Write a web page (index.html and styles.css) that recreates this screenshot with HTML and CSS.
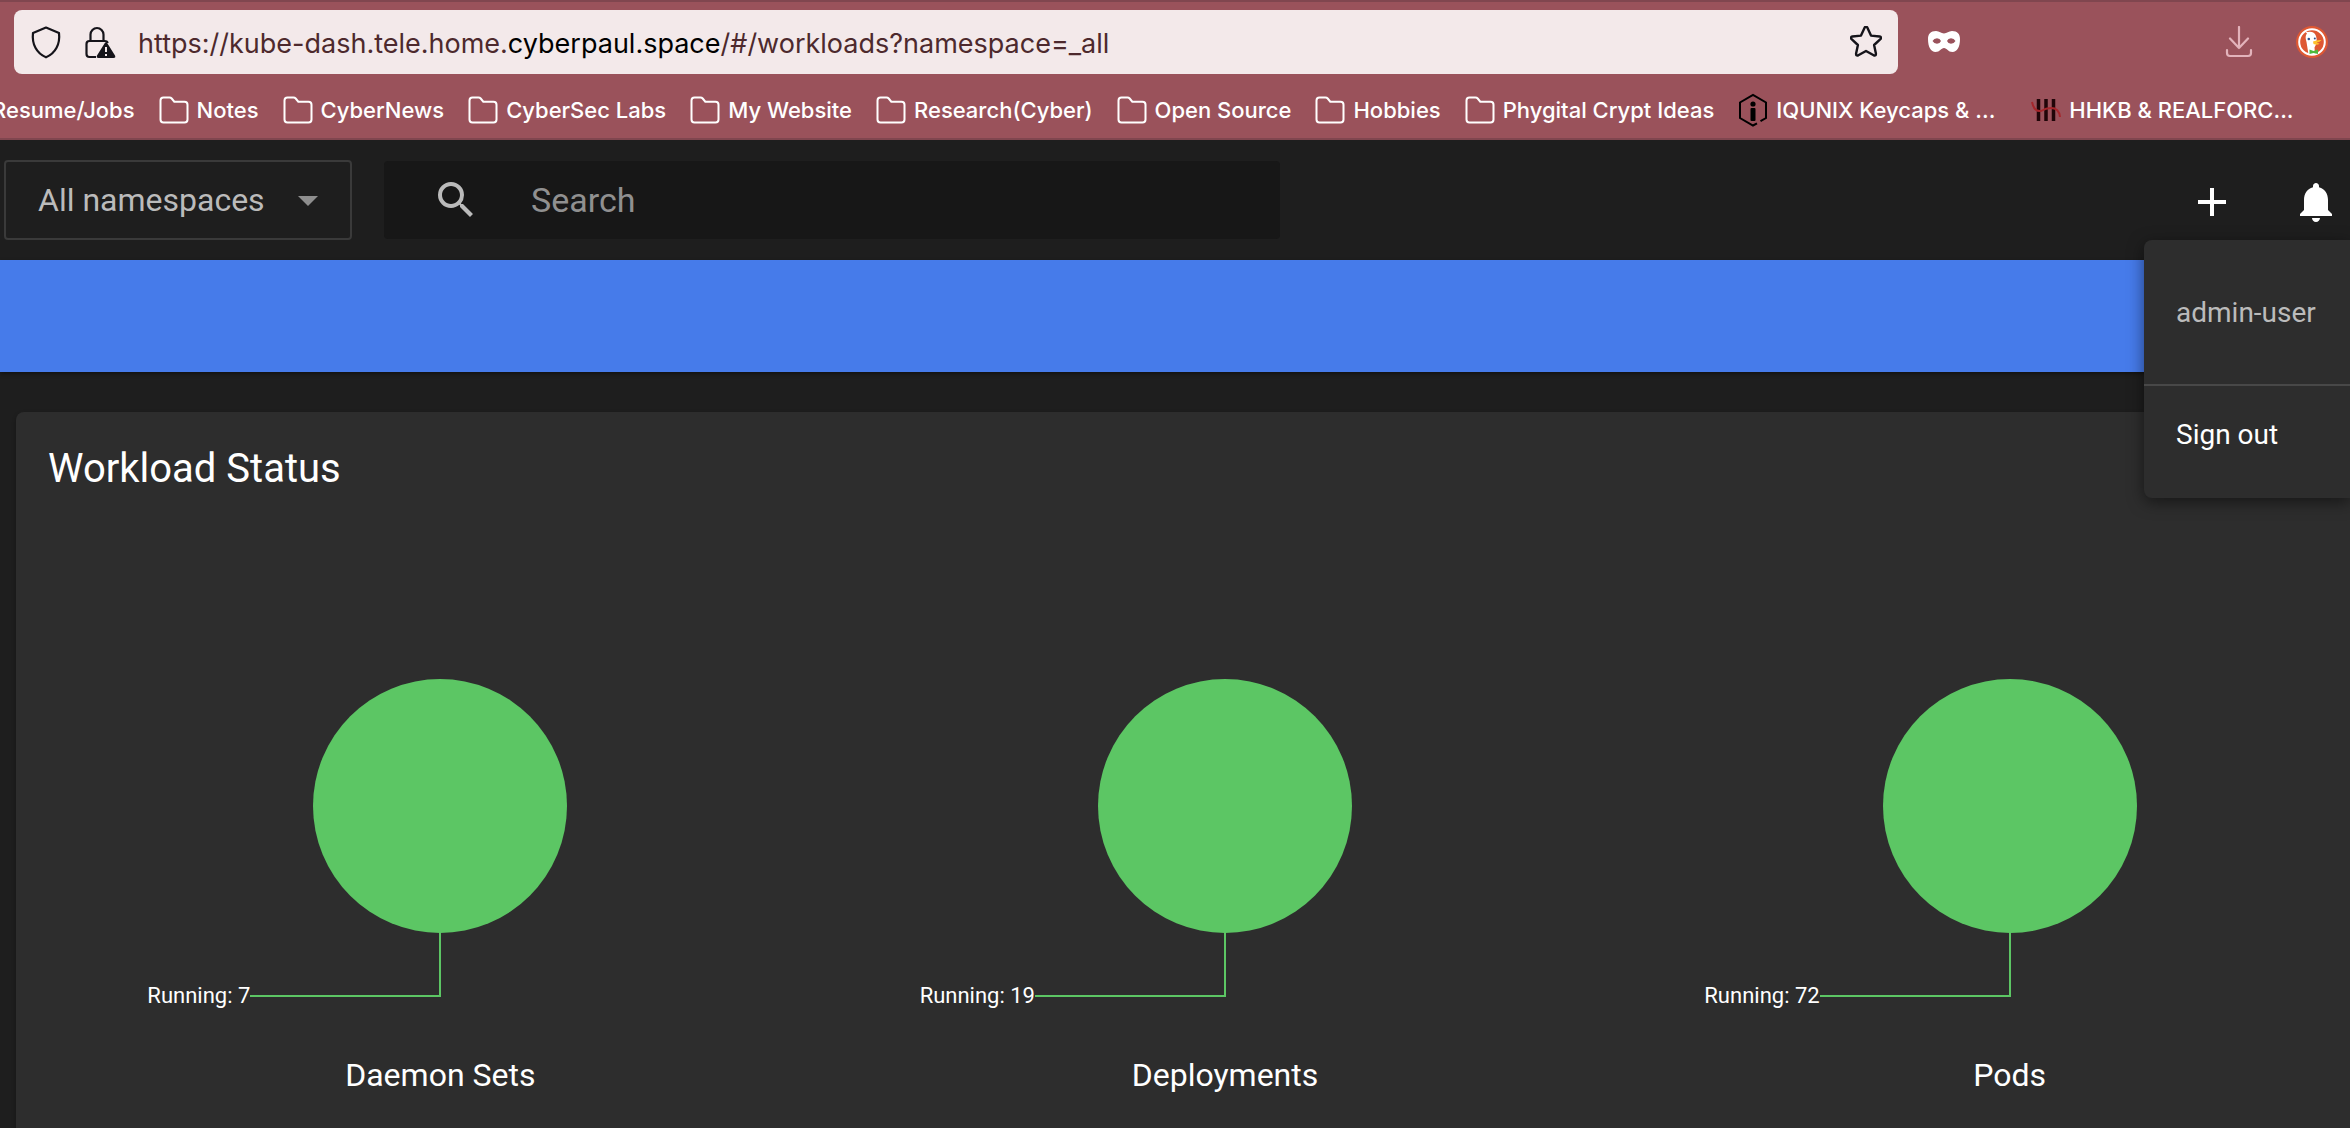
FILE: index.html
```html
<!DOCTYPE html>
<html lang="en">
<head>
<meta charset="utf-8">
<title>Kubernetes Dashboard</title>
<link rel="stylesheet" href="styles.css">
</head>
<body>
<svg class="sprite" aria-hidden="true">
  <symbol id="folder" viewBox="0 0 30 28"><path d="M4.500 1.500h6q1.300 0 2.200 1l2.600 3.200h10.200q3 0 3 3v14.800q0 3-3 3h-21q-3 0-3-3v-19q0-3 3-3z" fill="none" stroke="currentColor" stroke-width="2"/></symbol>
</svg>
<header class="browser">
  <div class="nav">
    <div class="urlbar">
      <svg class="url-icon" viewBox="0 0 32 34"><path d="M16 2.500 29 8c1.300 11-3.500 20.500-13 24.300C6.500 28.500 1.700 19 3 8z" fill="none" stroke="#15141a" stroke-width="2.200" stroke-linejoin="round"/></svg>
      <svg class="url-icon" viewBox="0 0 32 34"><g fill="none" stroke="#15141a" stroke-width="2.200"><path d="M6.500 16V9.500a6.500 6.500 0 0 1 13 0V16"/><path d="M12 32H5.500Q2.500 32 2.500 29V19q0-3 3-3h15q3 0 3 2"/></g><path d="M20.500 18.500q1.500-2.500 3 0l7.500 12q1 2.500-1.500 2.500h-15q-2.500 0-1.500-2.500z" fill="#15141a"/><path d="M22 22v5m0 2v2" stroke="#f3e9ea" stroke-width="2"/></svg>
      <div class="url">https://kube-dash.tele.home.<span class="host">cyberpaul.space</span>/#/workloads?namespace=_all</div>
      <button class="plain" aria-label="Bookmark this page"><svg width="32" height="32" viewBox="0 0 32 32"><path d="M14.600 1.700q1.400-2.300 2.800 0l3.600 7.900 8.600.9q2.500.7.800 2.600l-6.300 5.900 1.800 8.600q.2 2.700-2.200 1.700L16 25l-7.700 4.300q-2.400 1-2.200-1.700L7.900 19l-6.300-5.900q-1.700-1.900.8-2.600l8.600-.9z" fill="none" stroke="#15141a" stroke-width="2.400" stroke-linejoin="round"/></svg></button>
    </div>
    <svg class="mask" viewBox="0 0 32 22"><path fill="#fff" fill-rule="evenodd" d="M8 0c3.500 0 5 2.500 8 2.500S20.500 0 24 0c5.500 0 8 3 8 8 0 8-3 13-7.500 13C20 21 19 17 16 17s-4 4-8.500 4C3 21 0 16 0 8c0-5 2.500-8 8-8zM4.500 10q1.500-2.700 4.500-2.700t4 2.700q-1 2.700-4 2.700T4.500 10zM19 10q1-2.700 4-2.700t4.500 2.700q-1.500 2.700-4.500 2.700T19 10z"/></svg>
    <div class="extensions">
      <button class="plain" aria-label="Downloads"><svg width="28" height="32" viewBox="0 0 28 32"><path d="M14 1v21M5 12.500l9 9.500 9-9.500M2 24v3q0 3 3 3h18q3 0 3-3v-3" fill="none" stroke="#e3b3bb" stroke-width="2.200" stroke-linecap="round" stroke-linejoin="round"/></svg></button>
      <button class="plain" aria-label="DuckDuckGo"><svg width="32" height="32" viewBox="0 0 32 32"><circle cx="16" cy="16" r="16" fill="#de5833"/><circle cx="16" cy="16" r="12.800" fill="none" stroke="#fff" stroke-width="2"/><path d="M9 5.500l3 .5q6-1 8 4 1.200 3 .5 7.500l-2 4 .5 6.500q-4 1.500-6.500.5L10.500 16q-2-6 .5-8.500z" fill="#fff"/><path d="M17 15.500q4.500-2 8.500-1.500-1.500 2-5 2.800 2.500.7 3 .9-2 1.800-6 .3z" fill="#fdc12d"/><path d="M13.500 23.500l4 1.500 4.500-1.500v4.500l-4.500-1-4 1z" fill="#4cba3c"/><circle cx="12.800" cy="13" r="1.300" fill="#2d4f8e"/><circle cx="18.800" cy="12.500" r="1" fill="#2d4f8e"/></svg></button>
    </div>
  </div>
  <nav class="bookmarks">
    <a href="#">Resume/Jobs</a>
    <a href="#"><svg class="bm"><use href="#folder"/></svg>Notes</a>
    <a href="#"><svg class="bm"><use href="#folder"/></svg>CyberNews</a>
    <a href="#"><svg class="bm"><use href="#folder"/></svg>CyberSec Labs</a>
    <a href="#"><svg class="bm"><use href="#folder"/></svg>My Website</a>
    <a href="#"><svg class="bm"><use href="#folder"/></svg>Research(Cyber)</a>
    <a href="#"><svg class="bm"><use href="#folder"/></svg>Open Source</a>
    <a href="#"><svg class="bm"><use href="#folder"/></svg>Hobbies</a>
    <a href="#"><svg class="bm"><use href="#folder"/></svg>Phygital Crypt Ideas</a>
    <a href="#" class="site"><svg class="bm" viewBox="0 0 30 28"><path d="M19 27.300L15 29.500 2 22V6.500L15-1l13 7.500V22l-5.500 3.200" fill="none" stroke="#000" stroke-width="2"/><circle cx="15" cy="8" r="2.600"/><rect x="12.500" y="12" width="5" height="13" rx="1"/></svg>IQUNIX Keycaps &amp; ...</a>
    <a href="#" class="site"><svg class="bm" viewBox="0 0 30 28"><path d="M7.500 3v22M15 3v22M22.500 3v22" stroke="#200508" stroke-width="3.500"/><path d="M1 6q2 10 9 9 5-3 10-3 8 0 9 9" fill="none" stroke="#a5262b" stroke-width="2"/></svg>HHKB &amp; REALFORC...</a>
  </nav>
</header>
<div class="toolbar">
  <div class="namespace">
    <select aria-label="Namespace"><option>All namespaces</option></select>
    <svg class="caret" viewBox="0 0 20 10"><path d="M0 0h20L10 10z" fill="#8e8e8e"/></svg>
  </div>
  <label class="search">
    <svg width="48" height="48" viewBox="0 0 24 24"><path fill="#bbb" d="M15.500 14h-.79l-.28-.27A6.471 6.471 0 0 0 16 9.500 6.500 6.500 0 1 0 9.500 16c1.610 0 3.090-.59 4.230-1.570l.27.28v.79l5 4.990L20.490 19l-4.990-5zm-6 0C7.010 14 5 11.990 5 9.500S7.010 5 9.500 5 14 7.010 14 9.500 11.990 14 9.500 14z"/></svg>
    <input type="text" placeholder="Search" aria-label="Search">
  </label>
  <div class="actions">
    <button class="plain" aria-label="Create"><svg width="48" height="48" viewBox="0 0 24 24"><path fill="#fff" d="M19 13h-6v6h-2v-6H5v-2h6V5h2v6h6v2z"/></svg></button>
    <button class="plain" aria-label="Notifications"><svg width="48" height="48" viewBox="0 0 24 24"><path fill="#fff" d="M12 22c1.100 0 2-.9 2-2h-4c0 1.100.89 2 2 2zm6-6v-5c0-3.070-1.640-5.640-4.500-6.320V4c0-.83-.67-1.500-1.500-1.500s-1.500.67-1.500 1.500v.68C7.630 5.360 6 7.920 6 11v5l-2 2v1h16v-1l-2-2z"/></svg></button>
  </div>
  <div class="menu">
    <div class="user">admin-user</div>
    <button class="signout">Sign out</button>
  </div>
</div>
<div class="banner"></div>
<main class="content">
  <section class="card">
    <h1>Workload Status</h1>
    <div class="charts">
      <figure><div class="pie"></div><div class="leader"><span>Running: 7</span><i></i></div><figcaption>Daemon Sets</figcaption></figure>
      <figure><div class="pie"></div><div class="leader"><span>Running: 19</span><i></i></div><figcaption>Deployments</figcaption></figure>
      <figure><div class="pie"></div><div class="leader"><span>Running: 72</span><i></i></div><figcaption>Pods</figcaption></figure>
    </div>
  </section>
</main>
</body>
</html>
```
FILE: styles.css
```css
* { box-sizing: border-box; }
body { margin: 0; min-height: 100vh; background: #1e1e1e; color: #fff; font-family: Roboto, sans-serif; overflow: hidden; }
.sprite { display: none; }
svg { display: block; flex: none; }
.plain { padding: 0; border: 0; background: none; display: block; }

/* browser chrome */
.browser { height: 140px; background: #9a525b; border-top: 2px solid #80464f; border-bottom: 2px solid #80464f; font-family: Inter, sans-serif; }
.nav { display: flex; align-items: center; padding: 8px 22px 0 14px; }
.urlbar { width: 1884px; height: 64px; flex: 0 1 auto; display: flex; align-items: center; padding: 0 16px; background: #f3e9ea; border-radius: 8px; }
.url-icon { width: 32px; height: 34px; margin-right: 22px; }
.url { flex: 1; padding-top: 2px; font-size: 27px; color: #4d292d; white-space: nowrap; }
.host { color: #000; }
.mask { width: 32px; height: 22px; margin-left: 30px; }
.extensions { margin-left: auto; display: flex; align-items: center; gap: 43px; }
.bookmarks { display: flex; align-items: center; gap: 24px; height: 72px; margin-left: -8px; }
.bookmarks a { flex: none; display: flex; align-items: center; gap: 8px; color: #fff; text-decoration: none; font-size: 22px; font-weight: 500; white-space: nowrap; }
.bookmarks .site { width: 269px; }
.bm { width: 30px; height: 28px; overflow: visible; }

/* dashboard toolbar */
.toolbar { position: relative; display: flex; align-items: center; height: 120px; padding: 0 10px 0 4px; }
.namespace { position: relative; width: 348px; margin-right: 32px; }
.namespace select { appearance: none; width: 100%; height: 80px; padding: 0 32px; border: 2px solid #3a3a3a; border-radius: 4px; background: #1e1e1e; color: #bbb; font: 32px Roboto, sans-serif; }
.caret { position: absolute; right: 34px; top: 36px; width: 20px; height: 10px; pointer-events: none; }
.search { display: flex; align-items: center; width: 896px; height: 78px; padding-left: 48px; gap: 51px; background: #171717; border-radius: 4px; }
.search input { flex: 1; min-width: 0; border: 0; padding: 0; outline: 0; background: none; color: #fff; font: 34px Roboto, sans-serif; }
.search input::placeholder { color: #909090; opacity: 1; }
.actions { margin-left: auto; display: flex; align-items: center; gap: 56px; padding-top: 4px; }
.menu { position: absolute; top: 100px; right: 0; z-index: 2; width: 206px; background: #2d2d2d; border-radius: 8px 0 0 8px; box-shadow: 0 4px 16px rgba(0,0,0,.5); font-size: 28px; }
.user { height: 146px; padding: 0 32px; line-height: 146px; color: #bbb; border-bottom: 2px solid #484848; }
.signout { display: block; width: 100%; height: 112px; padding: 0 32px 16px; border: 0; background: none; color: #fff; font: 28px Roboto, sans-serif; text-align: left; }
.banner { height: 112px; background: #467bea; box-shadow: 0 2px 4px rgba(0,0,0,.4); }

/* workload card, running past the right edge of the window */
.content { padding: 40px 0 0 16px; }
.card { margin-right: -84px; padding: 32px; min-height: 760px; background: #2d2d2d; border-radius: 8px; box-shadow: 0 2px 4px rgba(0,0,0,.3); }
h1 { margin: 0; font-size: 40px; font-weight: 400; line-height: 50px; }
.charts { display: grid; grid-template-columns: repeat(3, 1fr); margin-top: 185px; }
figure { margin: 0; display: flex; flex-direction: column; align-items: center; }
.pie { width: 254px; height: 254px; border-radius: 50%; background: #5cc664; }
.leader { width: calc(50% + 1px); align-self: flex-start; display: flex; align-items: flex-end; justify-content: flex-end; font-size: 22px; line-height: 26px; height: 76px; }
.leader i { width: 191px; height: 64px; margin-bottom: 12px; border: solid #5cc664; border-width: 0 2px 2px 0; }
figcaption { margin-top: 46px; font-size: 32px; line-height: 40px; }
```
